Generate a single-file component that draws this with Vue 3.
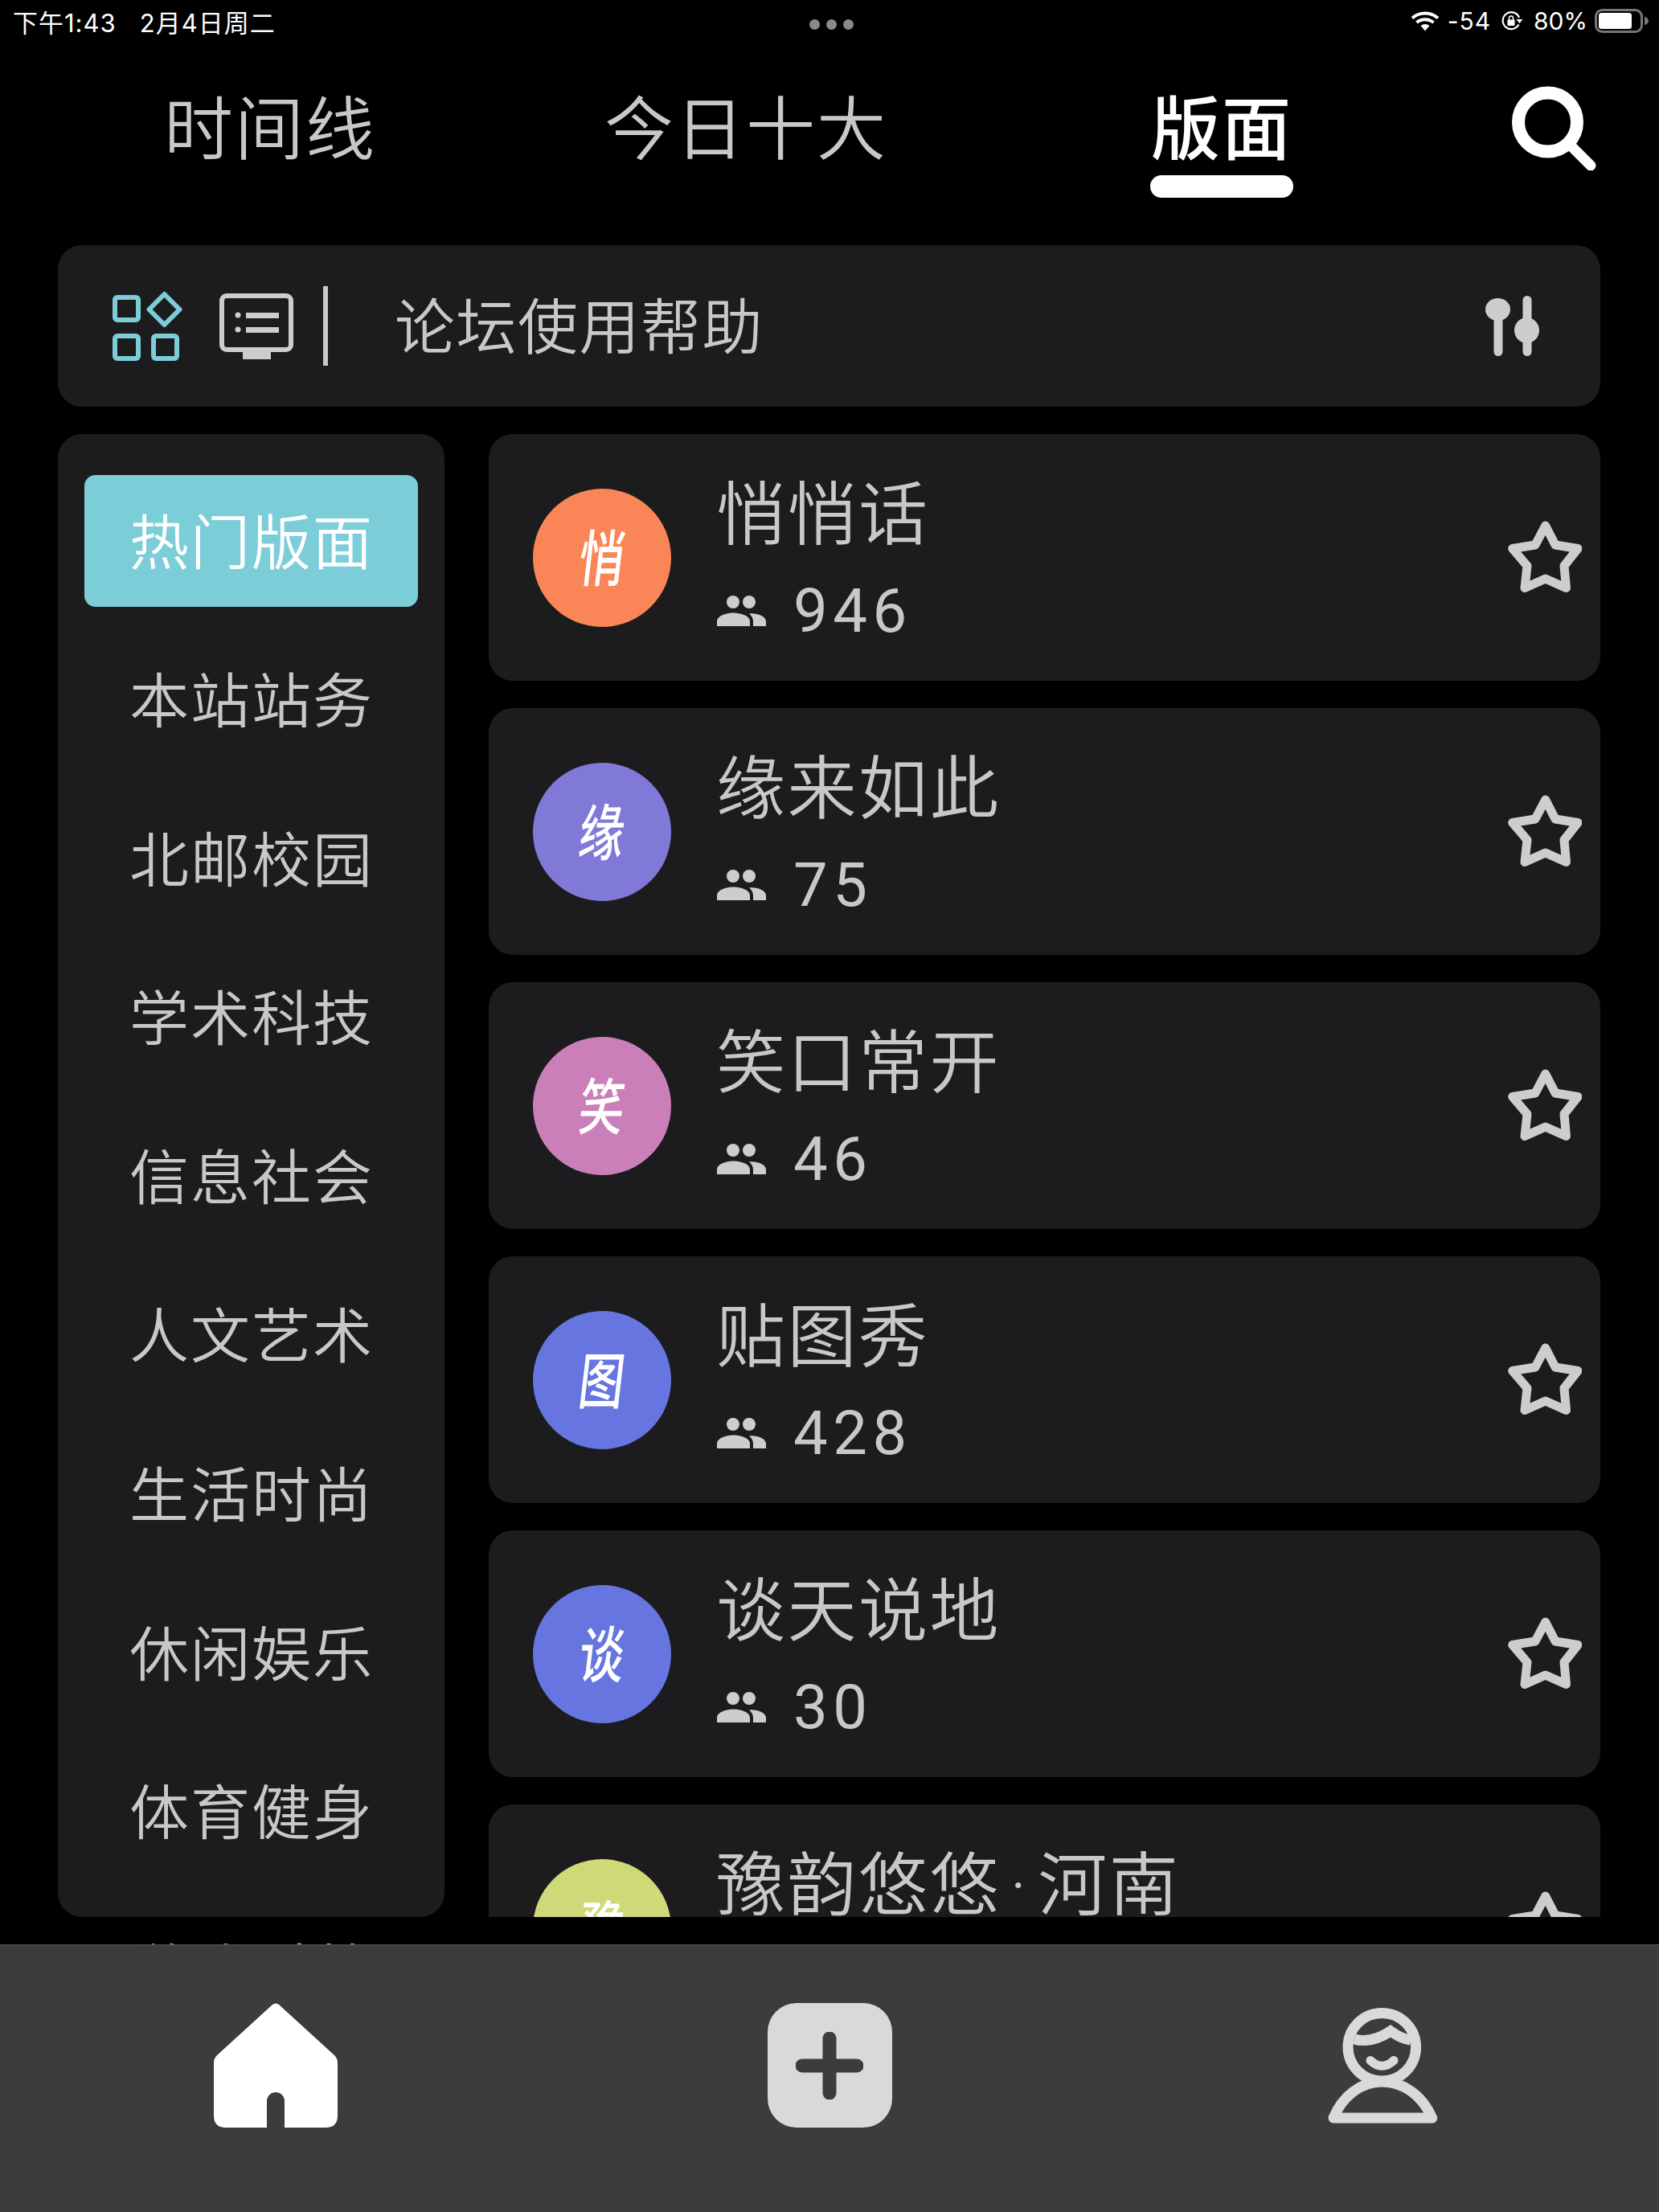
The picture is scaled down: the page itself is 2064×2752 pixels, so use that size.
<script setup>
import { ref } from 'vue'

const tabs = ['时间线', '今日十大', '版面']
const activeTab = ref(2)

const sections = ['热门版面', '本站站务', '北邮校园', '学术科技', '信息社会', '人文艺术', '生活时尚', '休闲娱乐', '体育健身', '游戏对战']
const activeSection = ref(0)

const boards = [
  { name: '悄悄话', mark: '悄', count: 946, color: '#fa8657' },
  { name: '缘来如此', mark: '缘', count: 75, color: '#8079d8' },
  { name: '笑口常开', mark: '笑', count: 46, color: '#cb7fb8' },
  { name: '贴图秀', mark: '图', count: 428, color: '#6675e0' },
  { name: '谈天说地', mark: '谈', count: 30, color: '#6675e0' },
  { name: '豫韵悠悠\u200a·\u200a河南', mark: '豫', count: '', color: '#cfd977' }
]
</script>

<template>
  <div class="app-page">
    <div class="status-bar">
      <div class="status-left">下午1:43 &nbsp;&nbsp;2月4日周二</div>
      <div class="status-dots"><i></i><i></i><i></i></div>
      <div class="status-right">
        <svg width="36" height="25" viewBox="0 0 36 25">
          <path d="M2 8.5 C11 0.5 25 0.5 34 8.5 M7.5 14 C13.5 9 22.5 9 28.5 14" fill="none" stroke="#fff" stroke-width="4" />
          <path d="M12.5 18 C16 15.3 20 15.3 23.5 18 L18 24.5 Z" fill="#fff" />
        </svg>
        <span class="signal">-54</span>
        <svg class="rotation" width="28" height="24" viewBox="0 0 28 24">
          <path d="M23 8 A10.5 10.5 0 1 0 22.5 16.5" fill="none" stroke="#fff" stroke-width="2.2" />
          <path d="M19.5 10 H27.5 L23.5 15 Z" fill="#fff" />
          <rect x="8.5" y="10.5" width="9" height="7.5" rx="1" fill="#fff" />
          <path d="M10.5 11 V8.5 A2.5 2.5 0 0 1 15.5 8.5 V11" fill="none" stroke="#fff" stroke-width="1.6" />
        </svg>
        <span class="percent">80%</span>
        <svg class="battery" width="68" height="30" viewBox="0 0 68 30">
          <rect x="1.5" y="1.5" width="57" height="27" rx="8" fill="none" stroke="#777" stroke-width="3" />
          <rect x="5" y="5" width="41" height="20" rx="3.5" fill="#fff" />
          <path d="M62 9.5 C65.5 11 67 13 67 15 C67 17 65.5 19 62 20.5 Z" fill="#777" />
        </svg>
      </div>
    </div>

    <header class="tab-row">
      <div
        v-for="(tab, i) in tabs"
        :key="tab"
        class="tab"
        :class="{ active: i === activeTab }"
        @click="activeTab = i"
      >
        <span class="tab-label">{{ tab }}</span>
        <span v-if="i === activeTab" class="tab-bar"></span>
      </div>
      <svg class="search-icon" width="105" height="105" viewBox="0 0 105 105">
        <circle cx="44.5" cy="45" r="36.5" fill="none" stroke="#fff" stroke-width="16" />
        <path d="M74 75 L98 99" stroke="#fff" stroke-width="13" stroke-linecap="round" />
      </svg>
    </header>

    <div class="toolbar">
      <svg width="87" height="87" viewBox="0 0 87 87" fill="none" stroke="#7bcdd8" stroke-width="6">
        <rect x="3" y="8" width="29" height="28" rx="3" />
        <path d="M64.5 4 L83.5 23 L64.5 42 L45.5 23 Z" stroke-linejoin="round" />
        <rect x="3" y="56" width="29" height="28" rx="3" />
        <rect x="51" y="56" width="29" height="28" rx="3" />
      </svg>
      <svg class="monitor-icon" width="92" height="82" viewBox="0 0 92 82">
        <rect x="3" y="3" width="86" height="67" rx="6" fill="none" stroke="#cdcdcd" stroke-width="6" />
        <rect x="29" y="72" width="35" height="10" fill="#cdcdcd" />
        <circle cx="23" cy="27" r="3.5" fill="#cdcdcd" />
        <circle cx="23" cy="45" r="3.5" fill="#cdcdcd" />
        <rect x="33" y="24" width="41" height="7" fill="#cdcdcd" />
        <rect x="33" y="42" width="41" height="7" fill="#cdcdcd" />
      </svg>
      <span class="toolbar-divider"></span>
      <span class="toolbar-text">论坛使用帮助</span>
      <svg class="slider-icon" width="68" height="75" viewBox="0 0 68 75" fill="#cdcdcd">
        <ellipse cx="15.5" cy="17" rx="15.5" ry="14" />
        <rect x="10.5" y="20" width="11" height="55" rx="5.5" />
        <ellipse cx="51.5" cy="43" rx="15.5" ry="16" />
        <rect x="46.5" y="0" width="11" height="75" rx="5.5" />
      </svg>
    </div>

    <main class="content">
      <aside class="sidebar">
        <div
          v-for="(section, i) in sections"
          :key="section"
          class="section-item"
          :class="{ active: i === activeSection }"
          @click="activeSection = i"
        >
          {{ section }}
        </div>
      </aside>

      <section class="board-list">
        <div v-for="board in boards" :key="board.name" class="board-card">
          <div class="board-avatar" :style="{ background: board.color }">
            <span>{{ board.mark }}</span>
          </div>
          <div class="board-info">
            <div class="board-name">{{ board.name }}</div>
            <div class="board-count">
              <svg width="61" height="38" viewBox="0 0 61 38" fill="#cdcdcd">
                <circle cx="20" cy="8" r="8" />
                <circle cx="40" cy="8" r="8" />
                <path d="M0 38 V32 C0 25 12 21.5 20.5 21.5 C29 21.5 41 25 41 32 V38 Z" />
                <path d="M45 38 V32 C45 28 43 25 40 22.5 C48 21 61 25 61 32 V38 Z" />
              </svg>
              <span>{{ board.count }}</span>
            </div>
          </div>
          <svg class="board-star" width="92" height="89" viewBox="0 0 92 89">
            <path
              d="M46.7 6 L59 30 L87 34.5 L70 56 L72.5 83.5 L46.7 72 L21 83.5 L24 56 L5.7 34.5 L34 30 Z"
              fill="none"
              stroke="#cdcdcd"
              stroke-width="11"
              stroke-linejoin="round"
            />
          </svg>
        </div>
      </section>
    </main>

    <nav class="bottom-bar">
      <div class="nav-slot">
        <svg class="home-icon" width="190" height="180" viewBox="0 0 190 180">
          <path
            d="M90 14 Q94 11 98 14 L167 77 Q171 81 171 86 V152 Q171 167 156 167 H105 V134 A11 11 0 0 0 83 134 V167 H32 Q17 167 17 152 V86 Q17 81 21 77 Z"
            fill="#fff"
          />
        </svg>
      </div>
      <div class="nav-slot">
        <div class="add-button">
          <svg width="84" height="84" viewBox="0 0 84 84">
            <path d="M8 42 H76 M42 8 V76" stroke="#3c3c3c" stroke-width="17" stroke-linecap="round" />
          </svg>
        </div>
      </div>
      <div class="nav-slot">
        <svg class="user-icon" width="160" height="170" viewBox="0 0 160 170" fill="none" stroke="#d9d9d9" stroke-width="13">
          <circle cx="79.3" cy="61.7" r="42.3" />
          <path d="M45 52 C63 57 78 50 90 42 C97 47 107 52 115 53" />
          <path d="M65 78.5 Q79.3 92 94 78.5" stroke-width="11" stroke-linecap="round" />
          <path d="M19 150 C30 123 53 105 79.3 105 C107 105 130 123 141.7 150 Z" stroke-linejoin="round" />
        </svg>
      </div>
    </nav>
  </div>
</template>

<style scoped>
.app-page {
  width: 2064px;
  height: 2752px;
  background: #000;
  color: #c8c8c8;
  display: flex;
  flex-direction: column;
  overflow: hidden;
  font-family: "Noto Sans CJK SC", sans-serif;
  font-weight: 350;
}

.status-bar {
  height: 52px;
  display: grid;
  grid-template-columns: 1fr auto 1fr;
  align-items: center;
  padding: 0 12px 0 16px;
  color: #fff;
  font-size: 30px;
  font-family: Inter, "Noto Sans CJK SC", sans-serif;
  font-weight: 400;
}

.status-left {
  font-size: 31px;
  letter-spacing: 1px;
}

.status-dots {
  display: flex;
  gap: 8px;
  padding-top: 8px;
}

.status-dots i {
  width: 13px;
  height: 13px;
  border-radius: 50%;
  background: #8a8a8a;
}

.status-right {
  display: flex;
  align-items: center;
  justify-content: flex-end;
}

.signal {
  margin-left: 10px;
  letter-spacing: 1px;
}

.rotation {
  margin-left: 12px;
}

.percent {
  margin-left: 13px;
}

.battery {
  margin-left: 9px;
}

.tab-row {
  height: 253px;
  box-sizing: border-box;
  display: flex;
  align-items: flex-start;
  padding: 57px 0 0 40px;
}

.tab {
  width: 592px;
  display: flex;
  flex-direction: column;
  align-items: center;
  font-size: 86px;
  letter-spacing: 2px;
  line-height: 100px;
}

.tab-label {
  margin-top: -4px;
  padding-bottom: 4px;
}

.tab.active {
  color: #fff;
  font-weight: 500;
}

.tab-bar {
  width: 178px;
  height: 28px;
  margin-top: 9px;
  border-radius: 14px;
  background: #fff;
}

.search-icon {
  margin: -2px 0 0 65px;
}

.toolbar {
  height: 201px;
  margin: 0 73px 0 72px;
  padding: 0 75px 0 68px;
  flex-shrink: 0;
  display: flex;
  align-items: center;
  background: #1c1c1e;
  border-radius: 30px;
}

.monitor-icon {
  margin-left: 46px;
}

.toolbar-divider {
  width: 6px;
  height: 99px;
  margin-left: 37px;
  background: #c8c8c8;
}

.toolbar-text {
  margin-left: 83px;
  padding-bottom: 8px;
  font-size: 75px;
  letter-spacing: 1.5px;
  flex: 1;
}

.content {
  height: 1879px;
  margin: 34px 73px 0 72px;
  flex-shrink: 0;
  display: grid;
  grid-template-columns: 481px 1383px;
  column-gap: 55px;
  overflow: hidden;
}

.sidebar {
  height: 1845px;
  box-sizing: border-box;
  padding: 51px 33px 0;
  background: #1c1c1e;
  border-radius: 30px;
}

.section-item {
  height: 164px;
  box-sizing: border-box;
  margin-bottom: 33.6px;
  padding: 0 0 8px 56px;
  display: flex;
  align-items: center;
  font-size: 74px;
  letter-spacing: 2px;
  border-radius: 14px;
}

.section-item.active {
  background: #7bcdd8;
  color: #fff;
}

.board-list {
  height: 1845px;
  overflow: hidden;
  display: flex;
  flex-direction: column;
  gap: 34px;
}

.board-card {
  height: 307px;
  flex-shrink: 0;
  display: flex;
  align-items: center;
  padding: 0 23px 0 55px;
  background: #1c1c1e;
  border-radius: 30px;
}

.board-avatar {
  width: 172px;
  height: 172px;
  flex-shrink: 0;
  border-radius: 50%;
  display: flex;
  align-items: center;
  justify-content: center;
  color: #fff;
}

.board-avatar span {
  padding-bottom: 8px;
  font-size: 76px;
  font-weight: 500;
  transform: scaleX(0.74) skewX(-9deg);
}

.board-info {
  flex: 1;
  margin-left: 56px;
}

.board-name {
  font-family: Roboto, "Noto Sans CJK SC", sans-serif;
  font-size: 86px;
  letter-spacing: 2.5px;
  line-height: 96px;
  margin-top: 6px;
}

.board-count {
  height: 80px;
  margin-top: 30px;
  display: flex;
  align-items: center;
  font-family: Roboto, sans-serif;
  font-weight: 400;
  font-size: 76px;
  letter-spacing: 6.5px;
}

.board-count svg {
  margin: 0 34px 0 1px;
}

.board-star {
  margin-top: -3px;
}

.bottom-bar {
  flex: 1;
  display: grid;
  grid-template-columns: repeat(3, 1fr);
  align-items: start;
  background: #3c3c3c;
  border-top: 2px solid #4a4a4a;
}

.nav-slot {
  display: flex;
  justify-content: center;
  padding-top: 61px;
}

.home-icon {
  margin-top: -2px;
}

.user-icon {
  margin-top: 3px;
}

.add-button {
  width: 155px;
  height: 155px;
  margin-top: 10px;
  display: flex;
  align-items: center;
  justify-content: center;
  background: #d9d9d9;
  border-radius: 36px;
}
</style>

<style>
html,
body {
  background: #000;
}
</style>
